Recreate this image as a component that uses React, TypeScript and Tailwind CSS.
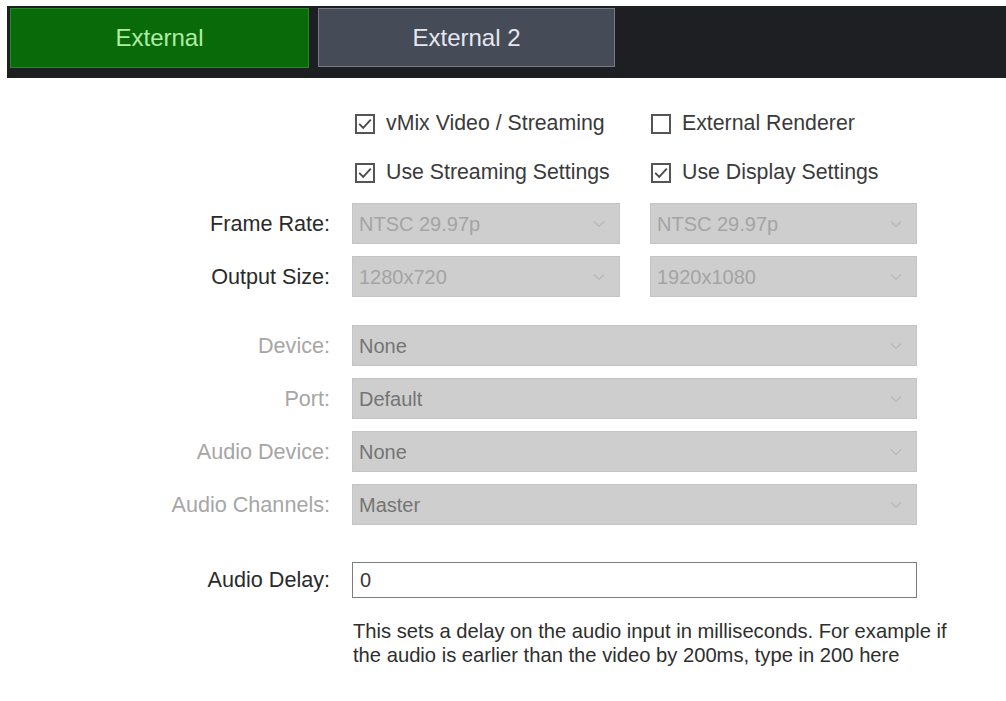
import React from "react";

const font = { fontFamily: '"Liberation Sans", Arial, sans-serif' };

function Chevron() {
  return (
    <svg width="12" height="8" viewBox="0 0 12 8" className="shrink-0">
      <path d="M1 1.5 L6 6.5 L11 1.5" fill="none" stroke="#b8b8b8" strokeWidth="1.2" />
    </svg>
  );
}

function CheckBox({ checked, label }: { checked: boolean; label: string }) {
  return (
    <div className="flex items-center gap-[11px]">
      <div className="w-[20px] h-[20px] border-2 border-[#555555] bg-white flex items-center justify-center">
        {checked && (
          <svg width="16" height="16" viewBox="0 0 16 16">
            <path d="M2.2 7.8 L6.2 11.8 L13.8 3.6" fill="none" stroke="#4a4a4a" strokeWidth="1.9" />
          </svg>
        )}
      </div>
      <span className="text-[#3a3a3a] text-[21.3px]">{label}</span>
    </div>
  );
}

function Select({ value, width, dim }: { value: string; width: string; dim?: boolean }) {
  return (
    <div
      className={`${width} h-[41px] bg-[#cecece] border border-[#c4c4c4] flex items-center justify-between pl-[6px] pr-[14px] ${
        dim ? "text-[#a4a4a4]" : "text-[#747474]"
      }`}
    >
      <span>{value}</span>
      <Chevron />
    </div>
  );
}

function Label({ text, light }: { text: string; light?: boolean }) {
  return (
    <div className={`w-[330px] text-right text-[21.6px] ${light ? "text-[#a6a6a6]" : "text-[#2a2a2a]"}`}>{text}</div>
  );
}

export default function App() {
  return (
    <div className="w-[1006px] h-[701px] bg-white overflow-hidden text-[20px] leading-none" style={font}>
      {/* tab bar */}
      <div className="mt-[6px] ml-[7px] h-[72px] bg-[#1d1f23] flex items-start gap-[9px] pt-[2px] pl-[3px]">
        <div className="w-[299px] h-[60px] bg-[#096a09] border border-[#248a24] flex items-center justify-center text-[#b0eca2] text-[24px]">
          External
        </div>
        <div className="w-[297px] h-[59px] bg-[#454b57] border border-[#767b88] flex items-center justify-center text-[#e4e7ee] text-[24px]">
          External 2
        </div>
      </div>

      {/* checkbox rows */}
      <div className="flex flex-col pl-[355px] mt-[36px] gap-[29px]">
        <div className="flex h-[20px] items-center">
          <div className="w-[296px]">
            <CheckBox checked label="vMix Video / Streaming" />
          </div>
          <CheckBox checked={false} label="External Renderer" />
        </div>
        <div className="flex h-[20px] items-center">
          <div className="w-[296px]">
            <CheckBox checked label="Use Streaming Settings" />
          </div>
          <CheckBox checked label="Use Display Settings" />
        </div>
      </div>

      {/* format rows */}
      <div className="flex flex-col gap-[12px] mt-[20px]">
        <div className="flex items-center gap-[22px]">
          <Label text="Frame Rate:" />
          <div className="flex gap-[30px]">
            <Select value="NTSC 29.97p" width="w-[268px]" dim />
            <Select value="NTSC 29.97p" width="w-[267px]" dim />
          </div>
        </div>
        <div className="flex items-center gap-[22px]">
          <Label text="Output Size:" />
          <div className="flex gap-[30px]">
            <Select value="1280x720" width="w-[268px]" dim />
            <Select value="1920x1080" width="w-[267px]" dim />
          </div>
        </div>
      </div>

      {/* device rows */}
      <div className="flex flex-col gap-[12px] mt-[28px]">
        <div className="flex items-center gap-[22px]">
          <Label text="Device:" light />
          <Select value="None" width="w-[565px]" />
        </div>
        <div className="flex items-center gap-[22px]">
          <Label text="Port:" light />
          <Select value="Default" width="w-[565px]" />
        </div>
        <div className="flex items-center gap-[22px]">
          <Label text="Audio Device:" light />
          <Select value="None" width="w-[565px]" />
        </div>
        <div className="flex items-center gap-[22px]">
          <Label text="Audio Channels:" light />
          <Select value="Master" width="w-[565px]" />
        </div>
      </div>

      {/* audio delay */}
      <div className="flex items-center gap-[22px] mt-[37px]">
        <Label text="Audio Delay:" />
        <div className="w-[565px] h-[36px] border border-[#7c7c7c] bg-white flex items-center pl-[7px] text-[#3a3a3a]">
          0
        </div>
      </div>
      <div className="ml-[353px] mt-[21px] text-[#2e2e2e] text-[20.2px] leading-[24px] w-[640px]">
        <div>This sets a delay on the audio input in milliseconds. For example if</div>
        <div>the audio is earlier than the video by 200ms, type in 200 here</div>
      </div>
    </div>
  );
}
